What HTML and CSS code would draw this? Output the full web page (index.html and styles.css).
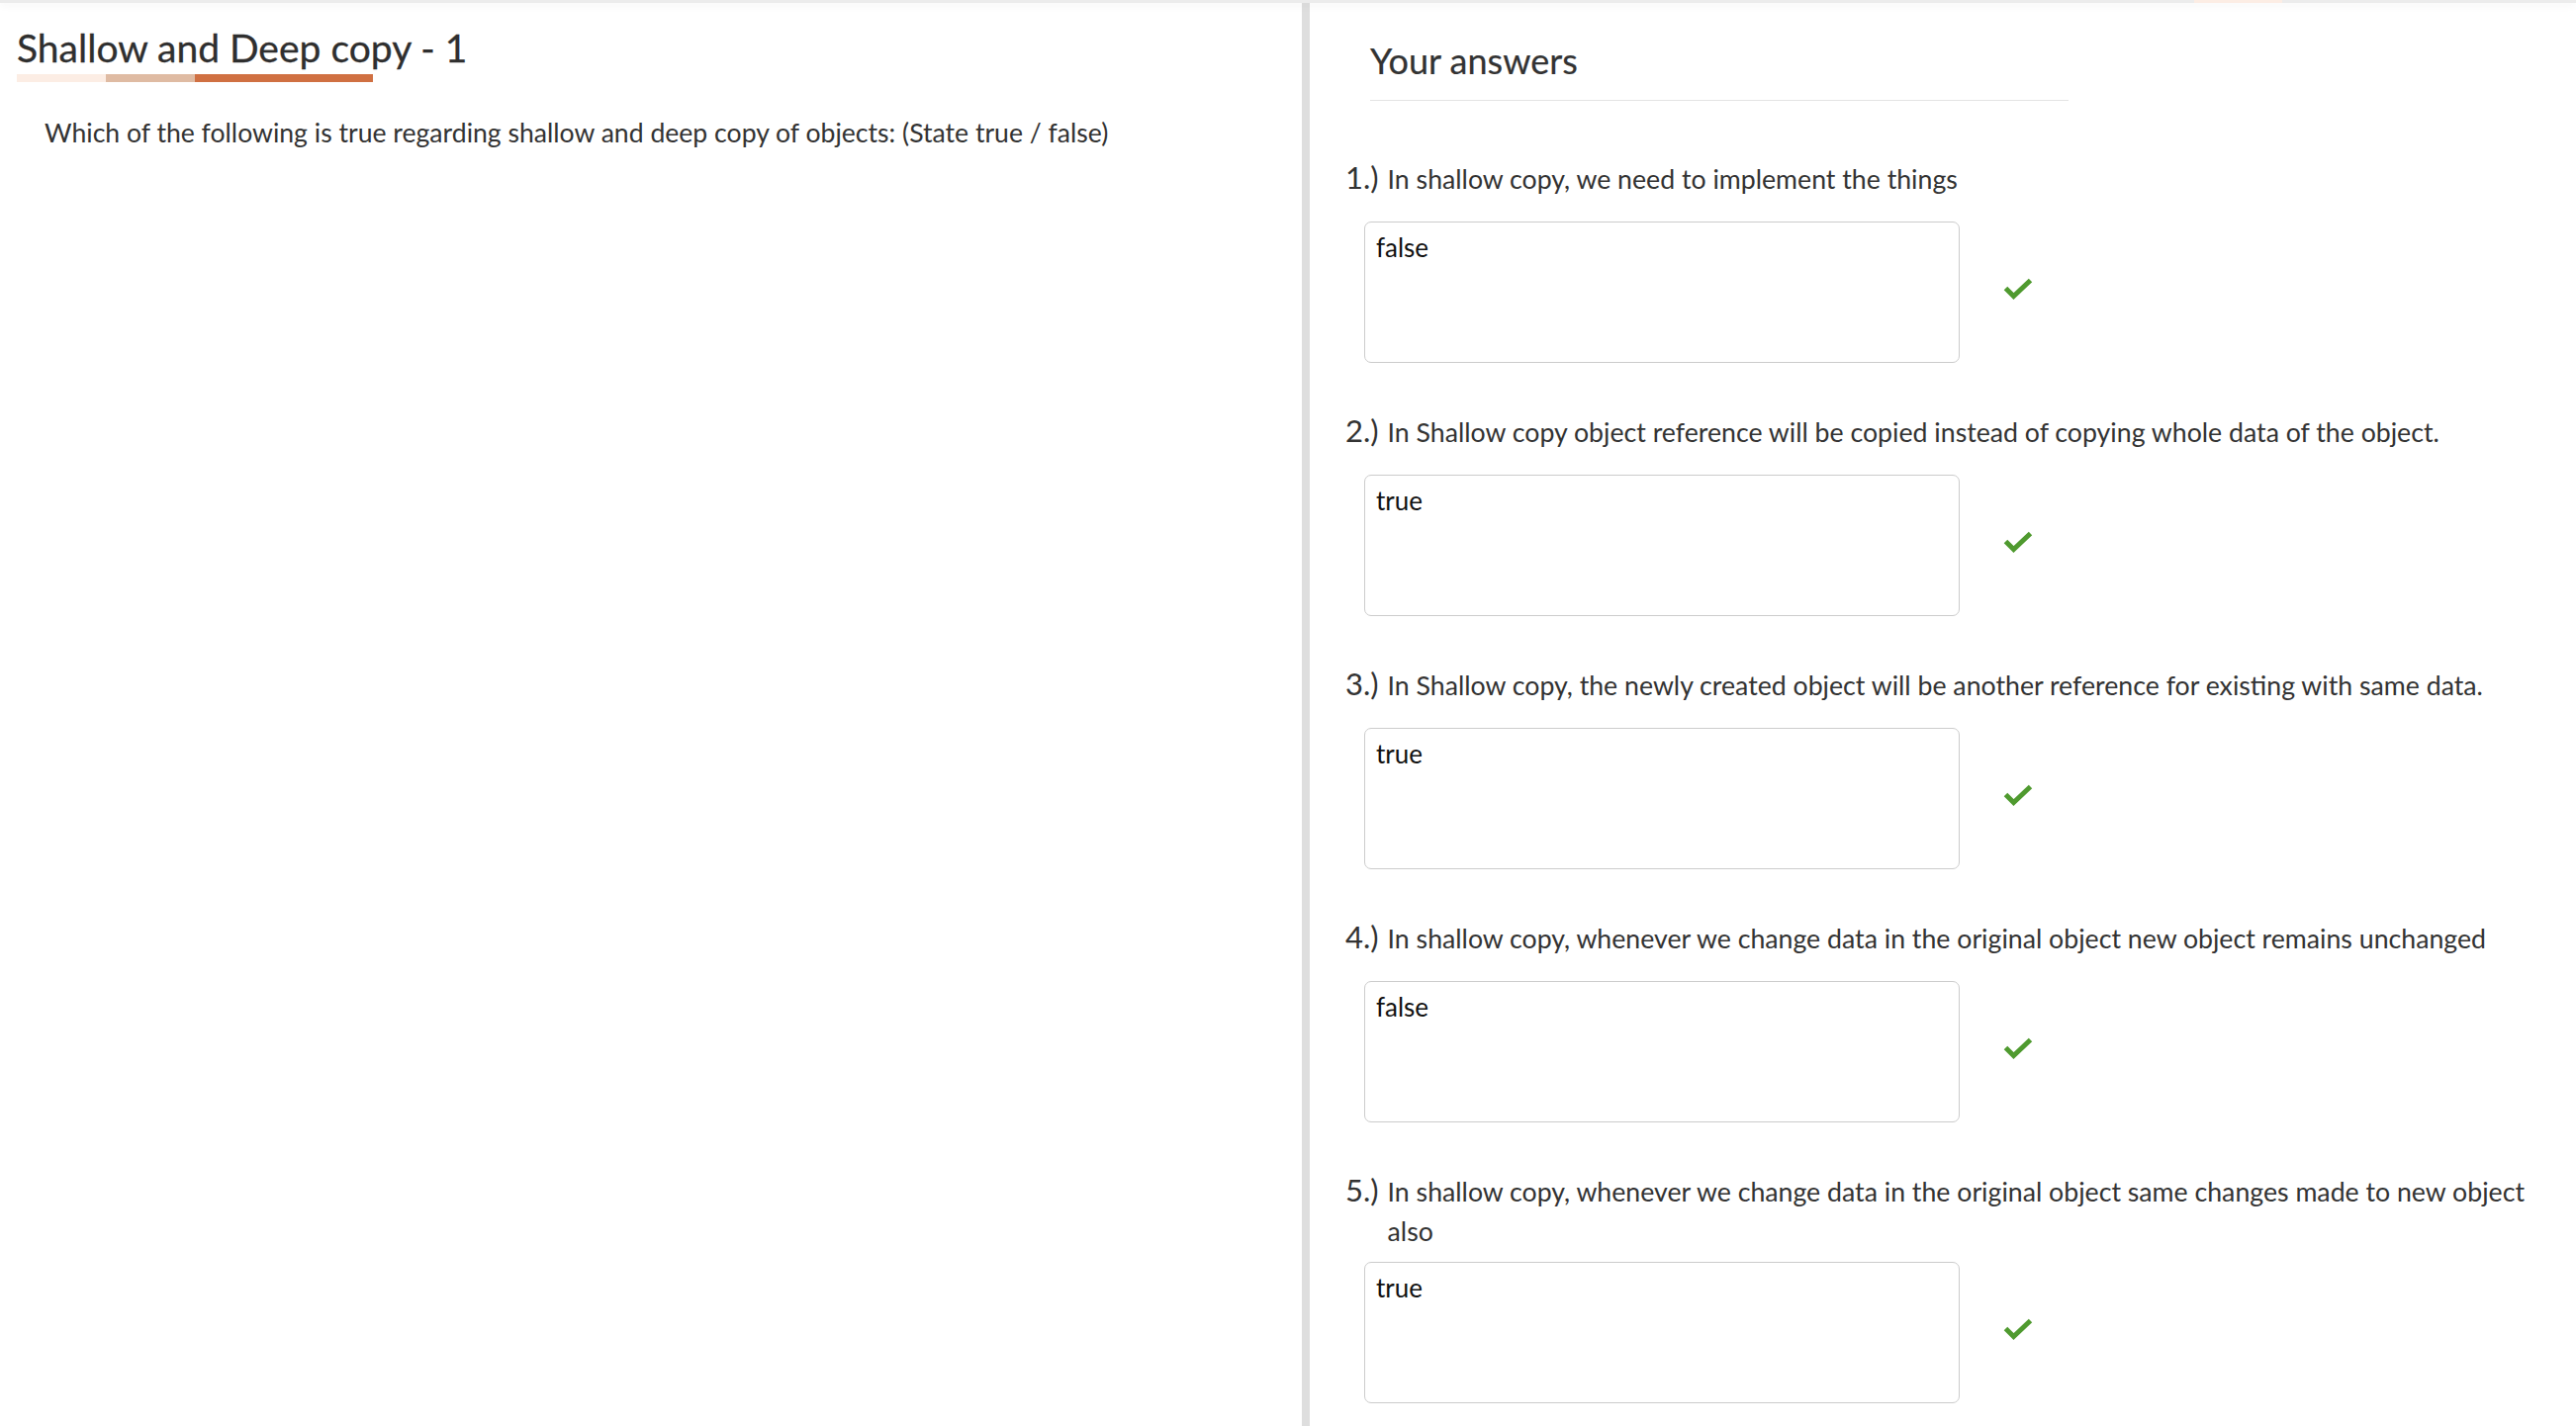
FILE: index.html
```html
<!DOCTYPE html>
<html lang="en">
<head>
<meta charset="utf-8">
<title>Shallow and Deep copy - 1</title>
<link rel="stylesheet" href="styles.css">
</head>
<body>
<div class="topbar"><span class="topbar-tab"></span></div>
<main class="layout">
  <section class="left">
    <h1 class="title">Shallow and Deep copy - 1</h1>
    <div class="progress">
      <span class="seg seg-1"></span>
      <span class="seg seg-2"></span>
      <span class="seg seg-3"></span>
    </div>
    <p class="prompt">Which of the following is true regarding shallow and deep copy of objects: (State true / false)</p>
  </section>
  <div class="divider"></div>
  <section class="right">
    <h2 class="answers-title">Your answers</h2>
    <ol class="answers">
      <li class="answer">
        <div class="q-row"><span class="q-num">1.)</span><span class="q-text">In shallow copy, we need to implement the things</span></div>
        <div class="a-row">
          <div class="a-box">false</div>
          <svg class="check" viewBox="0 0 30 22" width="30" height="22"><path d="M2.5 10.5 L10.5 18.5 L27.5 2.5" fill="none" stroke="#4f9a2f" stroke-width="5" stroke-linejoin="miter"/></svg>
        </div>
      </li>
      <li class="answer">
        <div class="q-row"><span class="q-num">2.)</span><span class="q-text">In Shallow copy object reference will be copied instead of copying whole data of the object.</span></div>
        <div class="a-row">
          <div class="a-box">true</div>
          <svg class="check" viewBox="0 0 30 22" width="30" height="22"><path d="M2.5 10.5 L10.5 18.5 L27.5 2.5" fill="none" stroke="#4f9a2f" stroke-width="5" stroke-linejoin="miter"/></svg>
        </div>
      </li>
      <li class="answer">
        <div class="q-row"><span class="q-num">3.)</span><span class="q-text">In Shallow copy, the newly created object will be another reference for existing with same data.</span></div>
        <div class="a-row">
          <div class="a-box">true</div>
          <svg class="check" viewBox="0 0 30 22" width="30" height="22"><path d="M2.5 10.5 L10.5 18.5 L27.5 2.5" fill="none" stroke="#4f9a2f" stroke-width="5" stroke-linejoin="miter"/></svg>
        </div>
      </li>
      <li class="answer">
        <div class="q-row"><span class="q-num">4.)</span><span class="q-text">In shallow copy, whenever we change data in the original object new object remains unchanged</span></div>
        <div class="a-row">
          <div class="a-box">false</div>
          <svg class="check" viewBox="0 0 30 22" width="30" height="22"><path d="M2.5 10.5 L10.5 18.5 L27.5 2.5" fill="none" stroke="#4f9a2f" stroke-width="5" stroke-linejoin="miter"/></svg>
        </div>
      </li>
      <li class="answer">
        <div class="q-row"><span class="q-num">5.)</span><span class="q-text">In shallow copy, whenever we change data in the original object same changes made to new object also</span></div>
        <div class="a-row">
          <div class="a-box">true</div>
          <svg class="check" viewBox="0 0 30 22" width="30" height="22"><path d="M2.5 10.5 L10.5 18.5 L27.5 2.5" fill="none" stroke="#4f9a2f" stroke-width="5" stroke-linejoin="miter"/></svg>
        </div>
      </li>
    </ol>
  </section>
</main>
</body>
</html>
```

FILE: styles.css
```css
* { box-sizing: border-box; }

html, body {
  margin: 0;
  padding: 0;
  background: #ffffff;
}

body {
  font-family: Lato, "Open Sans", "Liberation Sans", sans-serif;
  color: #333333;
  height: 1442px;
  overflow: hidden;
}

.topbar {
  height: 3px;
  background: #ececec;
  box-shadow: 0 2px 8px rgba(0, 0, 0, 0.07);
  display: flex;
  justify-content: flex-end;
  padding-right: 297px;
  position: relative;
  z-index: 2;
}

.topbar-tab {
  width: 89px;
  height: 3px;
  background: #fcede4;
}

.layout {
  display: grid;
  grid-template-columns: 1316px 8px 1fr;
  height: 1439px;
}

.left {
  padding: 22px 0 0 17px;
}

.title {
  margin: 0;
  font-size: 39px;
  line-height: 47px;
  font-weight: 400;
  color: #2f2f2f;
  -webkit-text-stroke: 0.3px #2f2f2f;
}

.progress {
  display: flex;
  width: 360px;
  height: 8px;
  margin-top: 3px;
}

.seg { display: block; height: 100%; }
.seg-1 { width: 90px; background: #fcede4; }
.seg-2 { width: 90px; background: #dfbba3; }
.seg-3 { width: 180px; background: #d07042; }

.prompt {
  margin: 31px 0 0 28px;
  font-size: 26.6px;
  line-height: 40px;
  color: #333333;
}

.divider {
  background: #dedede;
}

.right {
  padding: 36px 24px 0 36px;
}

.answers-title {
  margin: 0 0 0 25px;
  width: 706px;
  font-size: 36px;
  line-height: 44px;
  font-weight: 400;
  color: #333333;
  padding-bottom: 18px;
  border-bottom: 1px solid #e3e3e3;
  -webkit-text-stroke: 0.2px #333333;
}

.answers {
  list-style: none;
  margin: 57px 0 0 0;
  padding: 0;
}

.answer {
  margin-bottom: 48px;
}

.q-row {
  display: flex;
  align-items: baseline;
  gap: 9px;
  min-height: 54px;
  margin-bottom: 11px;
}

.q-num {
  flex: none;
  font-size: 31px;
  line-height: 40px;
  color: #333333;
}

.q-text {
  font-size: 26.7px;
  line-height: 40px;
  color: #333333;
}

.a-row {
  display: flex;
  align-items: center;
  gap: 44px;
  padding-left: 19px;
}

.a-box {
  width: 602px;
  height: 143px;
  border: 1px solid #cccccc;
  border-radius: 7px;
  padding: 8px 11px;
  font-size: 26px;
  line-height: 34px;
  color: #111111;
}

.check {
  flex: none;
  margin-top: -8px;
}
```
